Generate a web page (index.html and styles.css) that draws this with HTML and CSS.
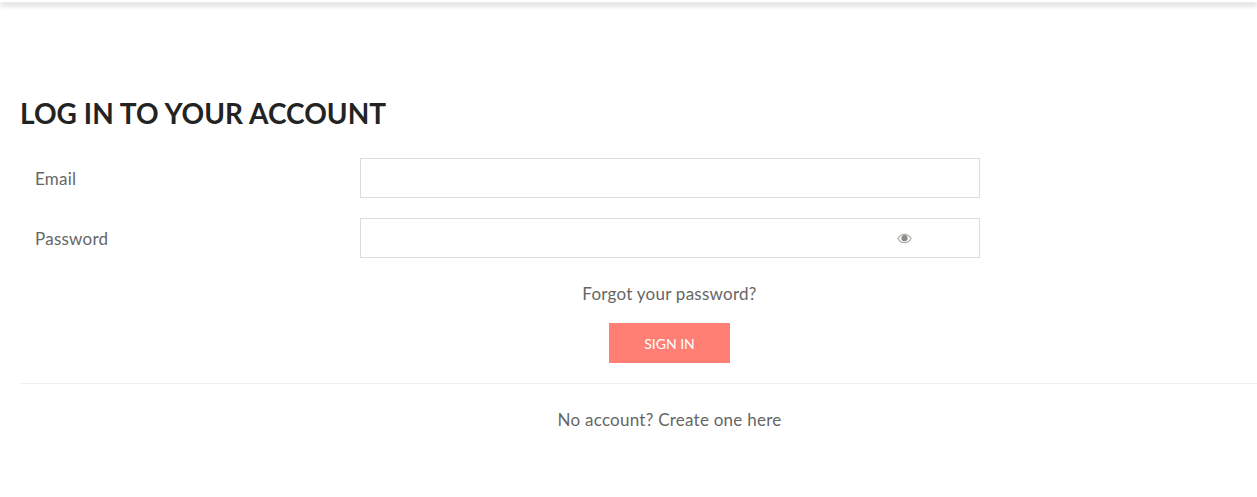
FILE: index.html
```html
<!DOCTYPE html>
<html lang="en">
<head>
<meta charset="UTF-8">
<meta name="viewport" content="width=device-width, initial-scale=1.0">
<title>Log in to your account</title>
<link rel="stylesheet" href="styles.css">
</head>
<body>

<div class="top-bar"></div>

<div class="page">
    <h1 class="page-title">Log in to your account</h1>

    <form class="login-form">
        <div class="form-row">
            <label class="form-label" for="email">Email</label>
            <div class="form-field">
                <input type="email" id="email" class="input-field">
            </div>
        </div>

        <div class="form-row">
            <label class="form-label" for="password">Password</label>
            <div class="form-field">
                <input type="password" id="password" class="input-field">
                <!-- show password icon -->
                <svg class="eye-icon" viewBox="0 0 16 12" width="15" height="11">
                    <path d="M0.8 6C2.6 2.9 5.1 1.3 8 1.3S13.4 2.9 15.2 6C13.4 9.1 10.9 10.7 8 10.7S2.6 9.1 0.8 6Z" fill="none" stroke="#a5a59c" stroke-width="1.2"/>
                    <circle cx="8" cy="5.6" r="3.4" fill="#8c8c86"/>
                </svg>
            </div>
        </div>

        <div class="forgot-row">
            <a href="#" class="form-link">Forgot your password?</a>
        </div>

        <div class="submit-row">
            <button type="submit" class="submit-btn">Sign in</button>
        </div>
    </form>

    <hr class="divider">

    <div class="register-row">
        <a href="#" class="form-link">No account? Create one here</a>
    </div>
</div>

</body>
</html>
```

FILE: styles.css
```css
body {
    margin: 0;
    background-color: #fff;
    font-family: "Lato", "Open Sans", sans-serif;
    color: #666;
}

.top-bar {
    height: 2px;
    background-color: #fff;
    box-shadow: 0 3px 5px rgba(0, 0, 0, 0.3);
}

.page {
    padding: 95px 0 0 20px;
}

.page-title {
    margin: 0 0 29px;
    height: 32px;
    font-size: 28px;
    line-height: 32px;
    font-weight: 700;
    letter-spacing: 0.06px;
    text-transform: uppercase;
    color: #232323;
}

.form-row {
    display: flex;
    align-items: center;
    margin-bottom: 20px;
}

.form-label {
    width: 340px;
    padding-left: 15px;
    box-sizing: border-box;
    font-size: 17px;
    letter-spacing: 0.25px;
}

.form-field {
    position: relative;
    width: 620px;
}

.input-field {
    display: block;
    width: 100%;
    height: 40px;
    box-sizing: border-box;
    border: 1px solid #dcdcdc;
    background-color: #fff;
}

.eye-icon {
    position: absolute;
    top: 15px;
    left: 537px;
}

.forgot-row {
    width: 960px;
    padding-left: 339px;
    box-sizing: border-box;
    text-align: center;
    line-height: 24px;
    margin-top: 24px;
}

.form-link {
    color: #666;
    text-decoration: none;
    font-size: 17px;
    letter-spacing: 0.25px;
}

.submit-row {
    width: 960px;
    padding-left: 339px;
    box-sizing: border-box;
    text-align: center;
    margin-top: 17px;
}

.submit-btn {
    width: 121px;
    height: 40px;
    border: none;
    background-color: #ff7f74;
    color: #fff;
    font-family: inherit;
    font-size: 14px;
    text-transform: uppercase;
}

.divider {
    margin: 20px 0 0;
    border: none;
    border-top: 1px solid #efefef;
}

.register-row {
    width: 960px;
    padding-left: 339px;
    box-sizing: border-box;
    text-align: center;
    line-height: 24px;
    margin-top: 24px;
}
```
